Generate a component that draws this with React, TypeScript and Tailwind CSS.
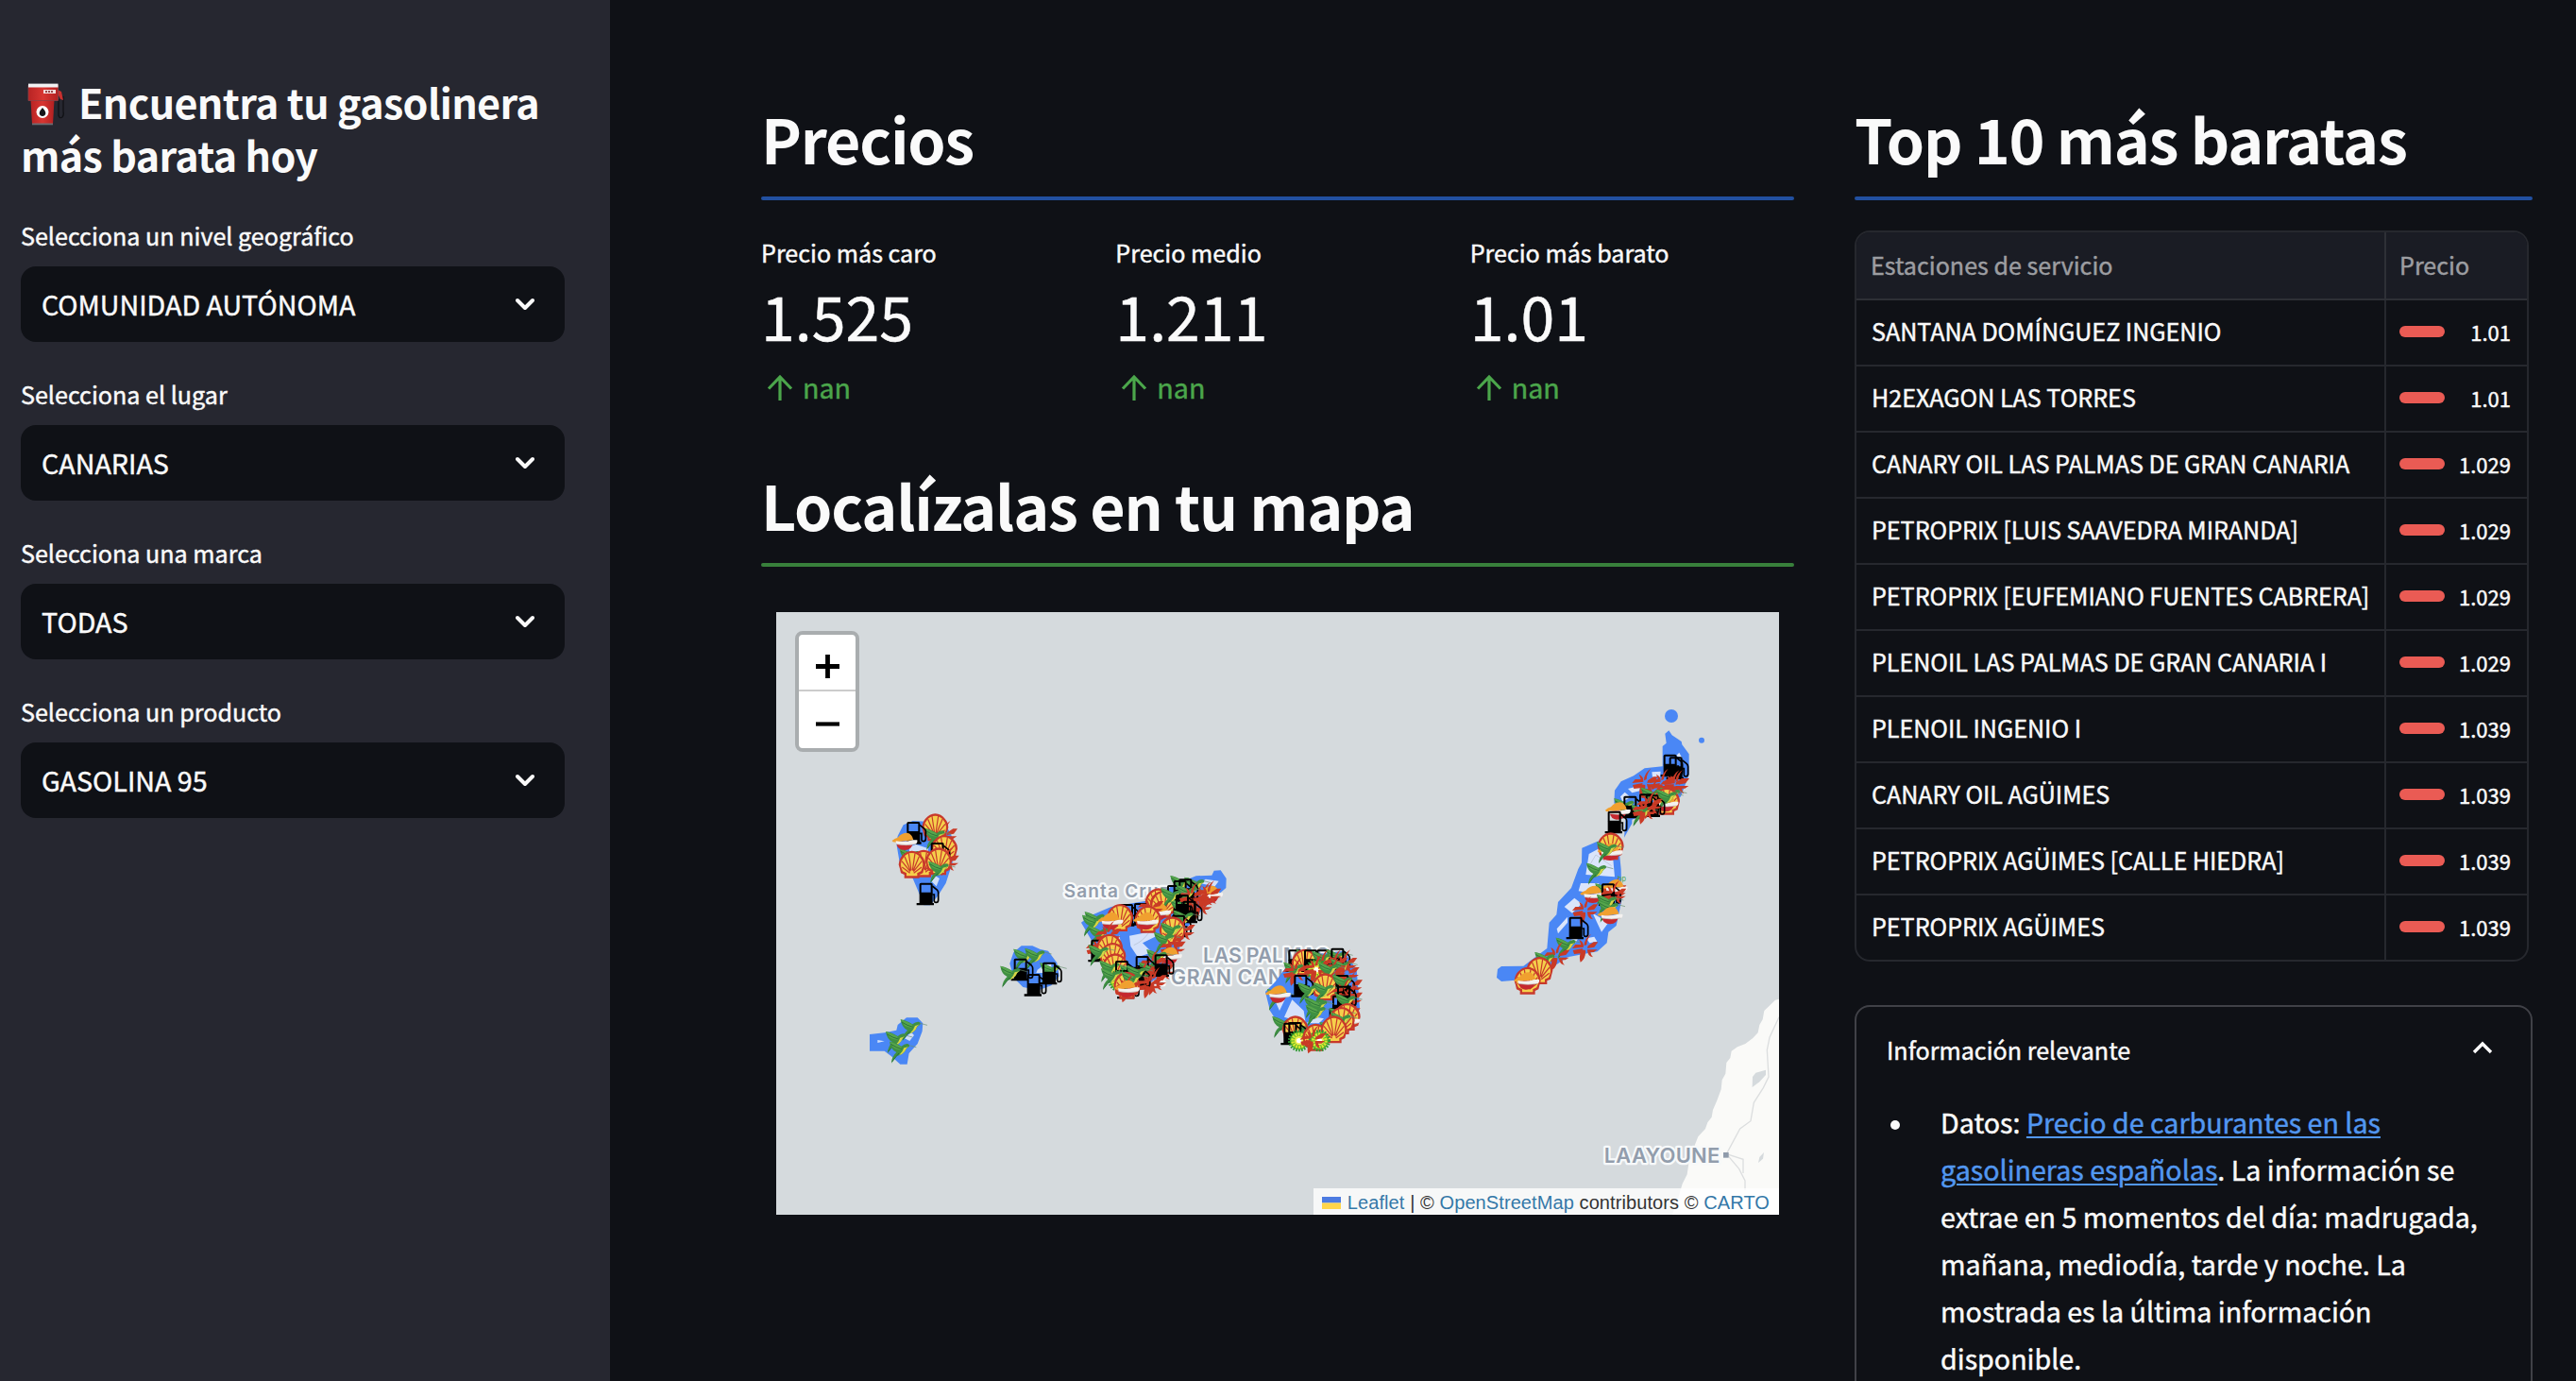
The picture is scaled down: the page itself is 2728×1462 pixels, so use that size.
import React from "react";

type Kind = "shell" | "pump" | "bird" | "repsol" | "cepsa" | "bp";
type Pin = [Kind, number, number];

const selects = [
  { label: "Selecciona un nivel geográfico", value: "COMUNIDAD AUTÓNOMA" },
  { label: "Selecciona el lugar", value: "CANARIAS" },
  { label: "Selecciona una marca", value: "TODAS" },
  { label: "Selecciona un producto", value: "GASOLINA 95" },
];

const metrics = [
  { label: "Precio más caro", value: "1.525" },
  { label: "Precio medio", value: "1.211" },
  { label: "Precio más barato", value: "1.01" },
];

const stations: [string, string][] = [
  ["SANTANA DOMÍNGUEZ INGENIO", "1.01"],
  ["H2EXAGON LAS TORRES", "1.01"],
  ["CANARY OIL LAS PALMAS DE GRAN CANARIA", "1.029"],
  ["PETROPRIX [LUIS SAAVEDRA MIRANDA]", "1.029"],
  ["PETROPRIX [EUFEMIANO FUENTES CABRERA]", "1.029"],
  ["PLENOIL LAS PALMAS DE GRAN CANARIA I", "1.029"],
  ["PLENOIL INGENIO I", "1.039"],
  ["CANARY OIL AGÜIMES", "1.039"],
  ["PETROPRIX AGÜIMES [CALLE HIEDRA]", "1.039"],
  ["PETROPRIX AGÜIMES", "1.039"],
];

const westPins: Pin[] = [
  ["cepsa", 540, 730], ["shell", 511, 708], ["bird", 520, 735], ["bird", 440, 800], ["shell", 540, 776],
  ["pump", 448, 724], ["pump", 524, 790], ["repsol", 414, 752], ["cepsa", 545, 815],
  ["shell", 474, 823], ["shell", 522, 816], ["shell", 437, 826], ["bird", 532, 840], ["pump", 488, 918],
  ["bird", 802, 1118], ["bird", 838, 1116], ["bird", 886, 1162], ["pump", 788, 1158],
  ["pump", 879, 1170], ["bird", 760, 1172], ["pump", 830, 1207],
  ["bird", 443, 1342], ["bird", 396, 1380], ["bird", 408, 1412],
];

const centerPins: Pin[] = [
  ["bird", 430, 165], ["bird", 475, 170], ["cepsa", 495, 205], ["repsol", 515, 200], ["cepsa", 508, 200],
  ["cepsa", 470, 215], ["cepsa", 480, 235], ["pump", 442, 185], ["pump", 405, 205], ["pump", 425, 190],
  ["bird", 450, 195], ["shell", 350, 225], ["shell", 366, 232], ["pump", 425, 250], ["bird", 430, 240],
  ["cepsa", 455, 205], ["bird", 400, 205], ["pump", 455, 255], ["pump", 432, 235], ["bird", 440, 275],
  ["pump", 255, 265], ["pump", 300, 262], ["repsol", 350, 255], ["cepsa", 325, 240], ["shell", 228, 275],
  ["bird", 158, 280], ["bird", 150, 290], ["shell", 317, 280], ["repsol", 198, 285], ["repsol", 310, 285],
  ["pump", 420, 300], ["cepsa", 425, 315], ["shell", 395, 315], ["bird", 170, 325], ["cepsa", 190, 328],
  ["cepsa", 390, 350], ["bird", 400, 315], ["bird", 378, 345], ["cepsa", 160, 370], ["pump", 163, 378],
  ["shell", 195, 370], ["shell", 205, 398], ["bird", 170, 385], ["cepsa", 395, 368],
  ["repsol", 385, 395], ["shell", 213, 432], ["bird", 205, 435], ["bird", 355, 400], ["cepsa", 330, 420],
  ["pump", 305, 430], ["bird", 330, 440], ["cepsa", 360, 440], ["pump", 365, 425], ["bird", 270, 450],
  ["cepsa", 300, 455], ["pump", 240, 445], ["bp", 225, 475], ["bird", 210, 460], ["cepsa", 335, 475],
  ["pump", 290, 465], ["pump", 255, 495], ["bird", 290, 450], ["cepsa", 320, 485], ["shell", 250, 490],
  ["bird", 275, 470], ["cepsa", 250, 498], ["repsol", 250, 500],
  ["pump", 790, 410], ["bird", 830, 400], ["shell", 815, 418], ["pump", 840, 410], ["pump", 880, 410],
  ["bird", 880, 405], ["bird", 925, 400], ["pump", 925, 405], ["cepsa", 870, 420], ["cepsa", 910, 420],
  ["cepsa", 940, 420], ["bird", 940, 430], ["cepsa", 947, 450], ["bp", 852, 440], ["bird", 790, 440],
  ["cepsa", 785, 445], ["cepsa", 850, 435], ["cepsa", 905, 445], ["bird", 900, 440],
  ["cepsa", 957, 490], ["shell", 880, 495], ["pump", 940, 490], ["bird", 945, 480], ["cepsa", 957, 530],
  ["pump", 808, 490], ["bird", 835, 505], ["bird", 885, 505], ["cepsa", 940, 510],
  ["bird", 738, 525], ["repsol", 730, 517], ["pump", 945, 525], ["pump", 930, 555], ["bird", 955, 540],
  ["bird", 855, 550], ["bird", 865, 555], ["bird", 860, 575], ["cepsa", 950, 580], ["pump", 920, 595],
  ["shell", 950, 590], ["repsol", 950, 600], ["bird", 935, 585], ["shell", 932, 602], ["bird", 940, 600],
  ["bird", 754, 612], ["shell", 785, 630], ["pump", 775, 642], ["bird", 840, 640], ["pump", 790, 640],
  ["bp", 797, 665], ["bird", 905, 630], ["shell", 850, 655], ["shell", 908, 630], ["bp", 862, 665],
  ["cepsa", 840, 660],
];

const eastPins: Pin[] = [
  ["pump", 632, 270], ["pump", 650, 278], ["cepsa", 545, 325], ["cepsa", 600, 325], ["cepsa", 635, 330],
  ["cepsa", 645, 330], ["cepsa", 570, 355], ["bird", 575, 365], ["bird", 636, 365], ["shell", 615, 385],
  ["repsol", 612, 390], ["bird", 625, 372], ["pump", 555, 395], ["pump", 575, 398], ["bird", 490, 400],
  ["pump", 505, 402], ["cepsa", 560, 395], ["repsol", 460, 415], ["bird", 545, 420], ["cepsa", 545, 412],
  ["pump", 455, 450], ["shell", 437, 528], ["repsol", 435, 545], ["bird", 435, 538], ["bird", 402, 605],
  ["bird", 430, 670], ["cepsa", 445, 670], ["repsol", 450, 660], ["repsol", 380, 680], ["pump", 435, 680],
  ["cepsa", 445, 680], ["cepsa", 355, 730], ["bird", 435, 705], ["bird", 440, 725], ["repsol", 435, 747],
  ["pump", 332, 786], ["bird", 305, 842], ["cepsa", 355, 850], ["cepsa", 265, 875], ["bird", 238, 888],
  ["shell", 211, 923], ["shell", 173, 955], ["repsol", 170, 955],
];

function MapSymbols() {
  return (
    <defs>
      <g id="pump">
        <rect x="-24" y="-31" width="36" height="30" rx="2" fill="none" stroke="#000" strokeWidth="6" />
        <path d="M-27-2H15V30H19V37H-36V30H-27Z" />
        <path d="M14-24 29-12Q33-8 33-3V20Q33 28 26 28T20 20V3H14" fill="none" stroke="#000" strokeWidth="5" />
      </g>
      <g id="shell">
        <path
          d="M-24 43V32L-35 27Q-38 12-42 0Q-40-18-31-28Q-18-43 0-44Q20-43 31-28Q42-16 42 0Q38 14 35 27L24 32V43Z"
          fill="#c8392b"
        />
        <path
          d="M-17 36V27L-29 21Q-36 7-35-2Q-34-15-26-23Q-16-37 0-37Q16-37 26-23Q34-15 35-2Q36 8 29 21L17 27V36Z"
          fill="#f5cf4b"
        />
        <path
          d="M-6 27-31 8M-5 22-32-11M-4 20-23-26M-2 18-10-36M2 18 10-36M4 20 23-26M5 22 32-11M6 27 31 8"
          stroke="#c8392b"
          strokeWidth="3.6"
        />
      </g>
      <g id="bird">
        <path d="M-42-24Q-26-22-4-9Q6-18 15-17Q24-15 20-8Q10-3 6 8Q-4 20-20 22L-36 45Q-36 24-20 10Q-38 2-42-24Z" fill="#3f9042" />
        <path d="M-42-24Q-26-20-6-9L-2 2Q-20 2-30-6Z" fill="#56a54c" />
        <path d="M4-4Q13-5 18-9Q10-3 6 8Q-1 17-12 20Q0 9 4-4Z" fill="#d9d545" />
        <path d="M-38-16Q-20-4-2 0M-34 40-12 13" stroke="#246b35" strokeWidth="2.5" fill="none" />
        <path d="M20-12 43-6" stroke="#6a8f70" strokeWidth="2" />
      </g>
      <g id="repsol">
        <path d="M-26 0H28Q24 28 0 28T-26 4Z" fill="#c5282f" />
        <path d="M-40-2Q-32-10-22-12Q-10-27 8-27Q24-24 28-4L-26 2Q-38 4-40-2Z" fill="#f0a02f" />
        <path d="M-28-1Q0 4 26-4H40Q42 6 34 9Q5 15-26 9Z" fill="#f4f1ef" />
        <path d="M-26 9Q5 15 34 9" stroke="#b9b3b2" strokeWidth="2" fill="none" />
      </g>
      <g id="cepsa" fill="#c93a26">
        <path d="M20-44Q-2-30-2-6L6-10Q6-26 20-44Z" />
        <path d="M-18-26Q-2-18-4-2L-40 2-30-10-12-10Z" />
        <path d="M10-6 28-18H42L30-2 8 2Z" />
        <path d="M-38 8-6 2-14 18-34 20Z" />
        <path d="M-10 6Q-20 24-14 46Q4 34 2 8Z" />
        <path d="M8 6H40L28 14H18Q20 26 26 30Q8 28 8 6Z" />
      </g>
      <g id="bp">
        <circle r="29" fill="#5db52b" />
        <circle r="31" fill="none" stroke="#2f9a31" strokeWidth="8" strokeDasharray="5 4" />
        <circle r="20" fill="none" stroke="#d9e72f" strokeWidth="10" strokeDasharray="6 3" />
        <circle r="14" fill="#f2ee4c" />
        <circle r="8" fill="#fff" />
      </g>
    </defs>
  );
}

function Pins({ items }: { items: Pin[] }) {
  return (
    <>
      {items.map(([kind, x, y], i) => (
        <use key={i} href={`#${kind}`} x={x} y={y} />
      ))}
    </>
  );
}

function IslandMap() {
  const halo = { stroke: "#f7f9fa", strokeWidth: 14, paintOrder: "stroke" as const, strokeLinejoin: "round" as const };
  return (
    <svg className="block h-full w-full" viewBox="822 648 1062 638">
      <MapSymbols />
      <rect x="822" y="648" width="1062" height="638" fill="#d5dadd" />

      <g transform="translate(1380 1040) scale(.33333)">
        <path
          d="M1530 50 1500 56 1480 76 1465 90 1460 118 1450 135 1445 160 1428 178 1405 195 1380 205 1361 218 1357 240 1345 255 1342 290 1331 310 1328 340 1315 375 1302 405 1298 428 1285 445 1278 465 1255 490 1245 515 1240 545 1225 575 1220 610 1205 640 1190 690 1168 750H1530Z"
          fill="#fafaf8"
        />
        <path d="M1512 110 1482 175 1474 215 1479 300 1462 335 1432 382 1422 440 1388 465 1345 545 1398 562V606M1345 545 1385 592 1404 630V660" fill="none" stroke="#dcdedf" strokeWidth="4" />
        <path d="M1427 333 1428 300 1438 287 1470 278V294L1450 316Z" fill="#d5dadd" />
        <path d="M1446 573 1450 555 1464 540 1461 560Z" fill="#d5dadd" />
        <rect x="1335" y="540" width="17" height="17" fill="#8f9bab" />
        <g fontFamily="Inter, sans-serif" fontWeight="600" fontSize="66" fill="#929dac">
          <text x="956" y="573" textLength="368" {...halo}>LAAYOUNE</text>
        </g>
      </g>

      <g transform="translate(1110 880) scale(.33333)" fontFamily="Inter, sans-serif" fontWeight="600" fill="#929dac">
        <text x="50" y="210" fontSize="57" textLength="336" {...halo}>Santa Cruz</text>
        <text x="492" y="417" fontSize="64" textLength="400" {...halo}>LAS PALMAS</text>
        <text x="283" y="486" fontSize="64" textLength="576" {...halo}>DE GRAN CANARI</text>
      </g>

      <g transform="translate(820 640) scale(.33333)">
        <path d="M388 760 392 735 410 700 440 687 500 690 545 700 566 740 566 820 545 885 520 925 495 955 475 955 455 905 440 870 400 830Z" fill="#4a87f5" />
        <path d="M428 770 450 762 490 775 482 800 430 795ZM510 860 525 870 515 895 500 880Z" fill="#d0dff8" />
        <path d="M748 1140 760 1105 785 1084 820 1084 845 1095 870 1100 898 1138 905 1180 880 1210 840 1225 790 1215 760 1185Z" fill="#4a87f5" />
        <path d="M836 1160 858 1144 880 1140V1170H832Z" fill="#d0dff8" />
        <path d="M303 1365 350 1360 388 1352 392 1335 420 1312 455 1312 472 1330 470 1355 455 1395 428 1425 422 1460 400 1460 372 1435 350 1418H303Z" fill="#4a87f5" />
        <path d="M328 1383 350 1387 328 1392ZM414 1378 435 1358 444 1368 430 1386Z" fill="#d0dff8" />
        <Pins items={westPins} />
      </g>

      <g transform="translate(1110 880) scale(.33333)">
        <path d="M105 290 130 270 200 240 320 220 400 170 470 142 520 140 527 125 548 124 566 150 565 180 530 210 470 270 430 320 410 400 340 470 270 520 220 500 180 440 140 350Z" fill="#4a87f5" />
        <path d="M484 166 500 152 542 158 530 175ZM258 332 330 318 350 330 300 355 330 385 285 400 262 365ZM218 352 226 330 236 380Z" fill="#d5e1fa" />
        <path d="M272 362Q300 350 320 322" fill="none" stroke="#bdc8dc" strokeWidth="3" />
        <path d="M690 510 720 480 780 400 940 380 980 440 990 560 970 620 900 660 780 660 730 610 705 570Z" fill="#4a87f5" />
        <path d="M724 545 752 535 735 570ZM750 590 775 535 812 570 818 610ZM850 590 876 595 860 610 820 610Z" fill="#d5e1fa" />
        <Pins items={centerPins} />
      </g>

      <g transform="translate(1560 720) scale(.33333)">
        <circle cx="630" cy="114" r="21" fill="#4a87f5" />
        <circle cx="726" cy="191" r="9" fill="#4a87f5" />
        <path d="M610 170 622 160 632 175 662 195 664 205 686 235V300L660 370 600 410 500 445 470 430 448 390 450 350 470 322 510 304 545 280 602 274V210L614 200Z" fill="#4a87f5" />
        <path d="M468 370 482 356 500 372 475 386ZM492 345 530 335 530 352 505 358ZM568 292 596 290 594 308H570ZM645 240 655 230 665 250Z" fill="#dae5fb" />
        <path d="M480 500 485 440 505 430V455Z" fill="#4a87f5" />
        <path d="M346 533 395 512 460 500 470 600 472 700 455 780 430 800 425 835 395 862 300 880 240 920 170 950 90 957 75 945 78 918 90 909 160 908 235 852 242 770 265 745 270 705 312 660 334 600 345 580Z" fill="#4a87f5" />
        <path d="M368 552 400 535 445 570 450 625 358 618ZM342 645 400 645 395 680 335 670ZM290 720 322 692 345 710 315 740ZM266 790 300 752 300 770 270 805ZM380 740 430 770 408 800ZM360 820 385 815 394 830 370 835ZM310 825 335 818 325 835Z" fill="#dae5fb" />
        <path d="M372 585 390 555 440 590" fill="none" stroke="#c1cbdd" strokeWidth="3" />
        <text x="459" y="639" fontSize="22" fontFamily="Inter, sans-serif" fill="#4aa34a">bp</text>
        <Pins items={eastPins} />
      </g>
    </svg>
  );
}

function PumpEmoji() {
  return (
    <svg className="mr-[13px] ml-[6px] inline-block h-[47px] w-[42px] align-[-8px]" viewBox="0 0 42 47">
      <defs>
        <linearGradient id="red" x1="0" x2="1">
          <stop offset="0" stopColor="#b82424" />
          <stop offset=".5" stopColor="#d83632" />
          <stop offset="1" stopColor="#b32021" />
        </linearGradient>
      </defs>
      <path d="M34 18v17q1 4 4 2 2-2 1-6V15" fill="none" stroke="#111216" strokeWidth="1.3" />
      <path d="M33 8l4 2 2 9-3-1-2-4Z" fill="#c9302e" />
      <path d="M4.500 19h25l-1.500 25H6Z" fill="url(#red)" />
      <path d="M2 3h31.500v16.500H2Z" fill="url(#red)" stroke="#8d4347" strokeWidth=".8" />
      <path d="M2 2h31.500v3.500H2Z" fill="#f1f1f3" />
      <path d="M2 1.500h31.500" stroke="#77777d" />
      <rect x="18" y="8" width="13" height="4" fill="#f2dada" />
      <path d="M20 10h9" stroke="#9b4548" strokeWidth="2" strokeDasharray="2 1" />
      <circle cx="17" cy="31.500" r="6.500" fill="#fff" />
      <path d="M17 27q5 5.500 2.500 8-2.500 2-5 0-2.500-2.500 2.500-8" fill="#16161a" />
      <path d="M6 43.500h22v1.800H6Z" fill="#6d6d73" />
    </svg>
  );
}

function Sidebar() {
  return (
    <aside className="h-full w-[646px] shrink-0 bg-[#262730] px-[22px] pt-[79px]">
      <h1 className="mb-[38px] text-[43px] leading-[56px] font-semibold tracking-[-0.65px] [-webkit-text-stroke:0px]">
        <PumpEmoji />
        Encuentra tu gasolinera
        <br />
        más barata hoy
      </h1>
      {selects.map((s) => (
        <div key={s.label} className="mb-[35px] w-[576px]">
          <div className="mb-[13px] text-[25.1px] leading-10">{s.label}</div>
          <div className="flex h-20 items-center justify-between rounded-2xl bg-[#0f1116] pr-8 pl-[22px] text-[28.65px]">
            <span>{s.value}</span>
            <svg className="h-5 w-5" viewBox="0 0 20 20" fill="none" stroke="#fafafa" strokeWidth="4" strokeLinecap="round" strokeLinejoin="round">
              <path d="M2 6l8 8 8-8" />
            </svg>
          </div>
        </div>
      ))}
    </aside>
  );
}

function Metric({ label, value }: { label: string; value: string }) {
  return (
    <div>
      <div className="text-[25.1px] leading-10">{label}</div>
      <div className="mt-[6px] text-[64.5px] leading-20">{value}</div>
      <div className="mt-[13px] flex items-center text-[28.65px] leading-12 text-[#4ba64b]">
        <svg className="mr-[10px] ml-[6px] h-7 w-7" viewBox="0 0 28 28" fill="none" stroke="currentColor" strokeWidth="3.2">
          <path d="M14 28V3M2 15.500l12-12.500 12 12.500" />
        </svg>
        <span>nan</span>
      </div>
    </div>
  );
}

function SectionTitle({ children }: { children: string }) {
  return (
    <h2 className="text-[64.5px] leading-20 font-semibold tracking-[-1.22px] whitespace-nowrap [-webkit-text-stroke:0px]">
      {children}
    </h2>
  );
}

function MainColumn() {
  return (
    <main className="ml-[160px] w-[1094px] shrink-0 pt-[106px]">
      <SectionTitle>Precios</SectionTitle>
      <div className="mt-[22px] h-1 rounded-sm bg-[#2250a0]" />
      <div className="mt-[35px] mb-[60px] grid grid-cols-3 gap-8">
        {metrics.map((m) => (
          <Metric key={m.label} {...m} />
        ))}
      </div>
      <SectionTitle>Localízalas en tu mapa</SectionTitle>
      <div className="mt-[22px] h-1 rounded-sm bg-[#38803b]" />
      <div className="relative mx-4 mt-12 h-[638px] overflow-hidden font-['Liberation_Sans',sans-serif] [-webkit-text-stroke:0px]">
        <IslandMap />
        <div className="absolute top-5 left-5 w-[68px] rounded-lg border-4 border-[#a9adaf] bg-white">
          <div className="flex h-[60px] items-center justify-center border-b-2 border-[#ccc]">
            <svg className="mt-2 h-[25px] w-[25px]" viewBox="0 0 25 25" stroke="#000" strokeWidth="4.8">
              <path d="M0 12.500h25M12.500 0v25" />
            </svg>
          </div>
          <div className="flex h-[60px] items-center justify-center">
            <svg className="mt-2 h-[25px] w-[25px]" viewBox="0 0 25 25" stroke="#000" strokeWidth="4.2">
              <path d="M0 12.500h25" />
            </svg>
          </div>
        </div>
        <div className="absolute right-0 bottom-0 flex h-7 items-center bg-white/80 pt-[2px] pr-[10px] pl-[9px] text-[20px] tracking-[0.09px] whitespace-pre text-[#333]">
          <svg className="mr-[7px] h-[13px] w-5" viewBox="0 0 20 13">
            <path d="M0 0h20v6.500H0Z" fill="#4c7be1" />
            <path d="M0 6.500h20V13H0Z" fill="#ffd54a" />
          </svg>
          <a className="text-[#3478a8]">Leaflet</a> | © <a className="text-[#3478a8]">OpenStreetMap</a> contributors © <a className="text-[#3478a8]">CARTO</a>
        </div>
      </div>
    </main>
  );
}

function RightColumn() {
  return (
    <section className="ml-16 w-[718px] shrink-0 pt-[106px]">
      <SectionTitle>Top 10 más baratas</SectionTitle>
      <div className="mt-[22px] h-1 rounded-sm bg-[#2250a0]" />
      <div className="mt-8 w-[714px] overflow-hidden rounded-2xl border-2 border-[#26282e]">
        <div className="flex h-[72px] border-b-2 border-[#2e3036] bg-[#1a1c24] text-[25.1px] leading-[68px] text-[#9c9da1]">
          <div className="w-[561px] border-r-2 border-[#2e3036] pl-[15px]">Estaciones de servicio</div>
          <div className="pl-[14px]">Precio</div>
        </div>
        {stations.map(([name, price]) => (
          <div key={name} className="flex h-[70px] border-b-2 border-[#26282e] last:h-[68px] last:border-b-0">
            <div className="w-[561px] shrink-0 border-r-2 border-[#26282e] pl-4 text-[25.1px] leading-[65px] tracking-[-0.02px] whitespace-nowrap">{name}</div>
            <div className="flex flex-1 items-center justify-between pr-[17px] pb-[2px] pl-[14px] text-[22px]">
              <span className="h-3 w-12 rounded-full bg-[#ea5b54]" />
              <span>{price}</span>
            </div>
          </div>
        ))}
      </div>
      <div className="mt-[46px] h-[460px] rounded-2xl border-2 border-[#404147] px-8 pt-[25px]">
        <div className="flex h-10 items-center justify-between text-[25.1px] leading-10">
          <span>Información relevante</span>
          <svg className="mr-2 h-5 w-[22px]" viewBox="0 0 22 20" fill="none" stroke="#fafafa" strokeWidth="3.4">
            <path d="M2 13l9-9 9 9" />
          </svg>
        </div>
        <ul className="mt-8 text-[28.65px] leading-[50px]">
          <li className="flex">
            <span className="mt-[23px] mr-[43px] ml-1 h-[10px] w-[10px] shrink-0 rounded-full bg-[#fafafa]" />
            <p className="whitespace-nowrap">
              Datos: <a className="text-[#5297f0] underline decoration-2 underline-offset-[3px]">Precio de carburantes en las</a>
              <br />
              <a className="text-[#5297f0] underline decoration-2 underline-offset-[3px]">gasolineras españolas</a>. La información se
              <br />
              extrae en 5 momentos del día: madrugada,
              <br />
              mañana, mediodía, tarde y noche. La
              <br />
              mostrada es la última información
              <br />
              disponible.
            </p>
          </li>
        </ul>
      </div>
    </section>
  );
}

export default function App() {
  return (
    <div className="flex h-[1462px] w-full overflow-hidden bg-[#0f1116] font-['Noto_Sans_CJK_SC',sans-serif] text-[#fafafa] [-webkit-text-stroke:0.45px]">
      <Sidebar />
      <MainColumn />
      <RightColumn />
    </div>
  );
}
